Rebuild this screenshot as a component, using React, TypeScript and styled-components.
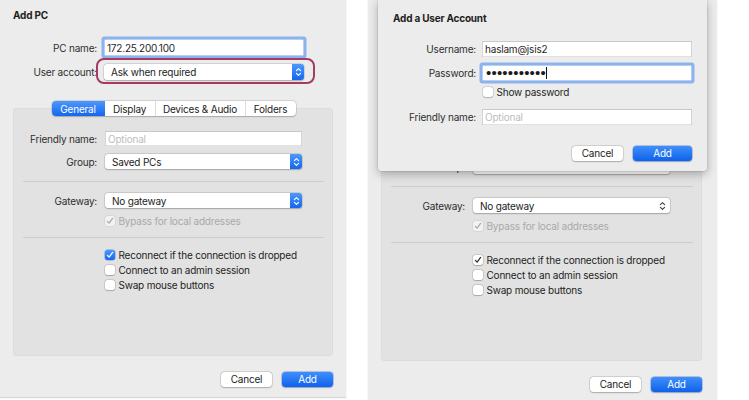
import React from "react";
import styled, { createGlobalStyle, css } from "styled-components";

const GlobalStyle = createGlobalStyle`
  html, body { margin: 0; padding: 0; background: #ffffff; }
  body {
    font-family: Inter, "Noto Sans", "Liberation Sans", sans-serif;
    font-size: 10px;
    letter-spacing: -0.2px;
    color: #262626;
    -webkit-font-smoothing: antialiased;
  }
`;

const Desktop = styled.div`
  display: flex;
  align-items: flex-start;
  gap: 22px;
  width: 749px;
  height: 400px;
  overflow: hidden;
  background: #ffffff;
`;

const Window = styled.div<{ $w: number; $h: number; $right: number }>`
  position: relative;
  flex: none;
  box-sizing: border-box;
  width: ${(p) => p.$w}px;
  height: ${(p) => p.$h}px;
  padding: 0 ${(p) => p.$right}px 0 13px;
  display: flex;
  flex-direction: column;
  background: #ececec;
  box-shadow: 0 1px 1px rgba(0, 0, 0, 0.16);
`;

const Title = styled.div<{ $top: number }>`
  margin-top: ${(p) => p.$top}px;
  height: 12px;
  line-height: 12px;
  font-weight: 700;
  color: #1e1e1e;
`;

const FormGrid = styled.div<{ $cols: string; $gap: number; $top: number }>`
  display: grid;
  grid-template-columns: ${(p) => p.$cols};
  column-gap: ${(p) => p.$gap}px;
  row-gap: 8px;
  align-items: center;
  margin-top: ${(p) => p.$top}px;
`;

const Label = styled.label`
  text-align: right;
  white-space: nowrap;
  color: #2e2e2e;
`;

const TextField = styled.div<{ $h: number; $focused?: boolean }>`
  box-sizing: border-box;
  height: ${(p) => p.$h}px;
  display: flex;
  align-items: center;
  padding-left: 3px;
  background: #ffffff;
  color: #1f1f1f;
  white-space: nowrap;
  box-shadow: inset 0 0 0 0.5px #c4c4c4, inset 0 0.5px 0 0.5px #cfcfcf;
  ${(p) =>
    p.$focused &&
    css`
      box-shadow: inset 0 0 0 0.5px #6f9de6, 0 0 0 2.5px rgba(110, 160, 238, 0.75);
      border-radius: 1px;
    `}
`;

const Placeholder = styled.span`
  color: #bdbdbd;
`;

const Dots = styled.span`
  font-family: "Liberation Sans", sans-serif;
  font-size: 15px;
  letter-spacing: 0.2px;
  line-height: 10px;
  color: #1c1c1c;
  margin-left: 1px;
`;

const Caret = styled.span`
  width: 1px;
  height: 12px;
  margin-left: 0.5px;
  background: #111111;
`;

const PopupBox = styled.div<{ $h: number }>`
  position: relative;
  box-sizing: border-box;
  height: ${(p) => p.$h}px;
  display: flex;
  align-items: center;
  padding-left: 7px;
  background: #ffffff;
  border-radius: 3px;
  color: #222222;
  box-shadow: 0 0 0 0.5px rgba(0, 0, 0, 0.15), 0 0.5px 1.5px rgba(0, 0, 0, 0.22);
`;

const PopupText = styled.span`
  flex: 1;
  white-space: nowrap;
`;

const Stepper = styled.span<{ $active: boolean }>`
  flex: none;
  align-self: stretch;
  display: flex;
  align-items: center;
  justify-content: center;
  ${(p) =>
    p.$active
      ? css`
          width: 12px;
          border-radius: 0 3px 3px 0;
          background: linear-gradient(#4d98fb, #1467ee);
        `
      : css`
          width: 16px;
        `}
`;

const Highlight = styled.div`
  position: relative;
  &::after {
    content: "";
    position: absolute;
    top: -6px;
    left: -8px;
    right: -11px;
    bottom: -4px;
    border: 2px solid #a53a62;
    border-radius: 8px;
    pointer-events: none;
  }
`;

const TabView = styled.div`
  display: flex;
  flex-direction: column;
  margin-top: 21px;
`;

const Segmented = styled.div`
  position: relative;
  z-index: 1;
  align-self: center;
  display: flex;
  height: 15px;
  margin-left: 1px;
  background: #ffffff;
  border-radius: 4px;
  box-shadow: 0 0 0 0.5px rgba(0, 0, 0, 0.16), 0 0.5px 1.5px rgba(0, 0, 0, 0.2);
`;

const Segment = styled.div<{ $w: number; $on?: boolean; $divider?: boolean }>`
  box-sizing: border-box;
  width: ${(p) => p.$w}px;
  display: flex;
  align-items: center;
  justify-content: center;
  white-space: nowrap;
  color: #222222;
  ${(p) => p.$divider && css`border-left: 1px solid #dedede;`}
  ${(p) =>
    p.$on &&
    css`
      color: #ffffff;
      border-radius: 4px 0 0 4px;
      background: linear-gradient(#4d98fb, #1467ee);
    `}
`;

const Panel = styled.div`
  box-sizing: border-box;
  height: 248px;
  margin-top: -8px;
  padding-top: 23px;
  display: flex;
  flex-direction: column;
  background: #e2e2e2;
  border-radius: 4px;
  box-shadow: inset 0 0 0 0.5px rgba(0, 0, 0, 0.05);
`;

const Separator = styled.div<{ $top: number; $bottom: number }>`
  height: 1px;
  margin: ${(p) => p.$top}px 9px ${(p) => p.$bottom}px 10px;
  background: #cdcdcd;
`;

const CheckRow = styled.div<{ $indent: number; $muted?: boolean }>`
  display: flex;
  align-items: center;
  gap: 3.5px;
  height: 12px;
  padding-left: ${(p) => p.$indent}px;
  white-space: nowrap;
  color: ${(p) => (p.$muted ? "#a9a9a9" : "#242424")};
`;

const CheckList = styled.div<{ $top: number }>`
  display: flex;
  flex-direction: column;
  gap: 3px;
  margin-top: ${(p) => p.$top}px;
`;

type BoxKind = "checked" | "quiet" | "empty" | "disabled";

const Box = styled.span<{ $kind: BoxKind }>`
  flex: none;
  box-sizing: border-box;
  width: 10px;
  height: 10px;
  border-radius: 2.5px;
  display: flex;
  align-items: center;
  justify-content: center;
  background: #ffffff;
  box-shadow: 0 0 0 0.5px rgba(0, 0, 0, 0.2), 0 0.5px 1px rgba(0, 0, 0, 0.18);
  ${(p) =>
    p.$kind === "checked" &&
    css`
      background: linear-gradient(#4d98fb, #1467ee);
      box-shadow: 0 0 0 0.5px rgba(10, 80, 210, 0.5);
    `}
  ${(p) =>
    p.$kind === "disabled" &&
    css`
      background: #f2f2f2;
      box-shadow: 0 0 0 0.5px rgba(0, 0, 0, 0.1);
    `}
`;

const Tick = ({ color }: { color: string }) => (
  <svg width="8" height="8" viewBox="0 0 8 8" fill="none">
    <path d="M1.4 4.3 L3.1 6.2 L6.6 1.4" stroke={color} strokeWidth="1.2" strokeLinecap="round" strokeLinejoin="round" />
  </svg>
);

const Chevrons = ({ color }: { color: string }) => (
  <svg width="7" height="10" viewBox="0 0 7 10" fill="none" stroke={color} strokeWidth="1.1" strokeLinecap="round" strokeLinejoin="round">
    <path d="M1.4 3.7 L3.5 1.6 L5.6 3.7" />
    <path d="M1.4 6.3 L3.5 8.4 L5.6 6.3" />
  </svg>
);

const Buttons = styled.div<{ $top: number }>`
  display: flex;
  justify-content: flex-end;
  gap: 10px;
  margin-top: ${(p) => p.$top}px;
`;

const Button = styled.button<{ $w: number; $primary?: boolean }>`
  box-sizing: border-box;
  width: ${(p) => p.$w}px;
  height: 15px;
  padding: 0;
  border: none;
  border-radius: 3.5px;
  font: inherit;
  letter-spacing: inherit;
  line-height: 15px;
  color: #222222;
  background: #ffffff;
  box-shadow: 0 0 0 0.5px rgba(0, 0, 0, 0.17), 0 0.5px 1.5px rgba(0, 0, 0, 0.22);
  ${(p) =>
    p.$primary &&
    css`
      color: #ffffff;
      background: linear-gradient(#3f8ffb, #0f62ea);
      box-shadow: 0 0 0 0.5px rgba(10, 70, 200, 0.45), 0 0.5px 1.5px rgba(0, 0, 0, 0.2);
    `}
`;

const Sheet = styled.div`
  position: absolute;
  z-index: 5;
  top: 0;
  left: 10px;
  box-sizing: border-box;
  width: 329px;
  height: 171px;
  padding: 0 15px;
  display: flex;
  flex-direction: column;
  background: #ececec;
  border-radius: 0 0 3px 3px;
  box-shadow: 0 3px 10px rgba(0, 0, 0, 0.28), 0 0 0 0.5px rgba(0, 0, 0, 0.12);
`;

const Popup = ({ text, active, h }: { text: string; active: boolean; h: number }) => (
  <PopupBox $h={h}>
    <PopupText>{text}</PopupText>
    <Stepper $active={active}>
      <Chevrons color={active ? "#ffffff" : "#444444"} />
    </Stepper>
  </PopupBox>
);

const Check = ({ label, kind, muted, indent }: { label: string; kind: BoxKind; muted?: boolean; indent: number }) => (
  <CheckRow $indent={indent} $muted={muted}>
    <Box $kind={kind}>
      {kind === "checked" && <Tick color="#ffffff" />}
      {kind === "quiet" && <Tick color="#2a2a2a" />}
      {kind === "disabled" && <Tick color="#a8a8a8" />}
    </Box>
    <span>{label}</span>
  </CheckRow>
);

const AddPCWindow = ({ width, height, right, active, offset, children }: {
  width: number;
  height: number;
  right: number;
  active: boolean;
  offset: number;
  children?: React.ReactNode;
}) => (
  <Window $w={width} $h={height} $right={right}>
    <Title $top={9 + offset}>Add PC</Title>
    <FormGrid $cols="84px 200px" $gap={7} $top={18}>
      <Label>PC name:</Label>
      <TextField $h={17} $focused={active}>172.25.200.100</TextField>
      <Label>User account:</Label>
      {active ? (
        <Highlight>
          <Popup text="Ask when required" active h={16} />
        </Highlight>
      ) : (
        <Popup text="Ask when required" active={false} h={16} />
      )}
    </FormGrid>
    <TabView>
      <Segmented>
        <Segment $w={53} $on={active}>General</Segment>
        <Segment $w={50} $divider={!active}>Display</Segment>
        <Segment $w={90} $divider>Devices &amp; Audio</Segment>
        <Segment $w={51} $divider>Folders</Segment>
      </Segmented>
      <Panel>
        <FormGrid $cols="84px 197px" $gap={8} $top={0}>
          <Label>Friendly name:</Label>
          <TextField $h={15}>
            <Placeholder>Optional</Placeholder>
          </TextField>
          <Label>Group:</Label>
          <Popup text="Saved PCs" active={active} h={15} />
        </FormGrid>
        <Separator $top={12} $bottom={11} />
        <FormGrid $cols="84px 197px" $gap={8} $top={0}>
          <Label>Gateway:</Label>
          <Popup text="No gateway" active={active} h={15} />
        </FormGrid>
        <CheckList $top={7}>
          <Check indent={92} kind="disabled" muted label="Bypass for local addresses" />
        </CheckList>
        <Separator $top={10} $bottom={0} />
        <CheckList $top={11}>
          <Check indent={92} kind={active ? "checked" : "quiet"} label="Reconnect if the connection is dropped" />
          <Check indent={92} kind="empty" label="Connect to an admin session" />
          <Check indent={92} kind="empty" label="Swap mouse buttons" />
        </CheckList>
      </Panel>
    </TabView>
    <Buttons $top={16}>
      <Button $w={51}>Cancel</Button>
      <Button $w={51} $primary>Add</Button>
    </Buttons>
    {children}
  </Window>
);

const UserAccountSheet = () => (
  <Sheet>
    <Title $top={12}>Add a User Account</Title>
    <FormGrid $cols="83px 210px" $gap={6} $top={17}>
      <Label>Username:</Label>
      <TextField $h={16}>haslam@jsis2</TextField>
      <Label>Password:</Label>
      <TextField $h={16} $focused>
        <Dots>•••••••••••</Dots>
        <Caret />
      </TextField>
    </FormGrid>
    <CheckList $top={5}>
      <Check indent={90} kind="empty" label="Show password" />
    </CheckList>
    <FormGrid $cols="83px 210px" $gap={6} $top={11}>
      <Label>Friendly name:</Label>
      <TextField $h={16}>
        <Placeholder>Optional</Placeholder>
      </TextField>
    </FormGrid>
    <Buttons $top={21}>
      <Button $w={51}>Cancel</Button>
      <Button $w={59} $primary>Add</Button>
    </Buttons>
  </Sheet>
);

export default function App() {
  return (
    <>
      <GlobalStyle />
      <Desktop>
        <AddPCWindow width={346} height={397} right={13} active offset={0} />
        <AddPCWindow width={349} height={400} right={15} active={false} offset={5}>
          <UserAccountSheet />
        </AddPCWindow>
      </Desktop>
    </>
  );
}
